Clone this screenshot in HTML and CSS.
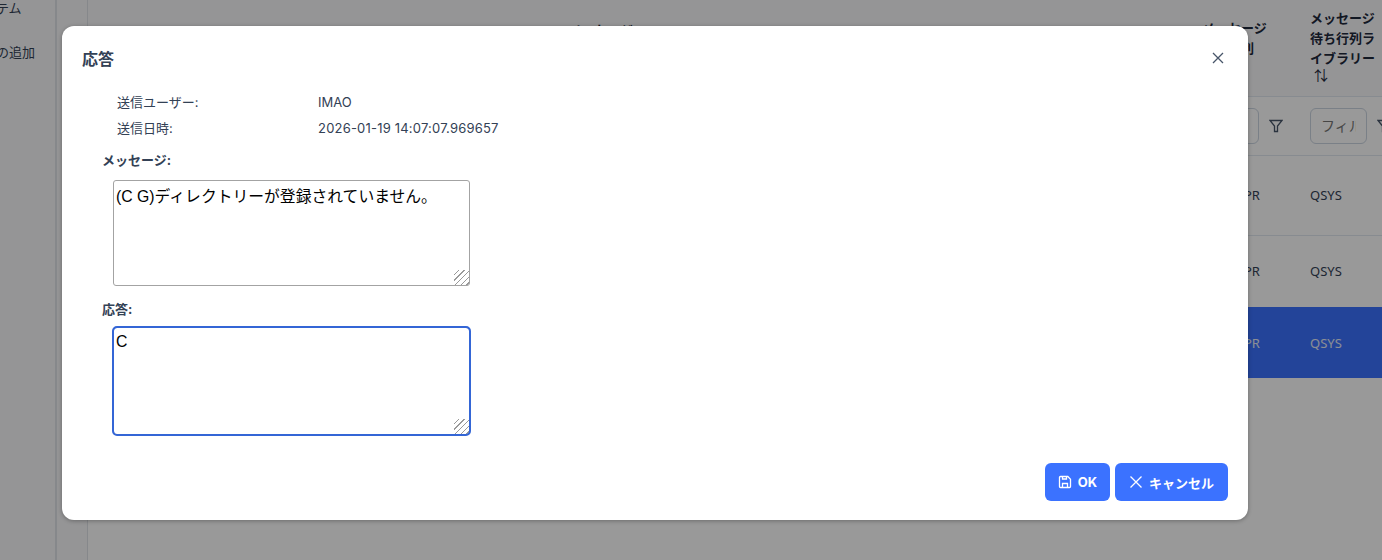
FILE: index.html
```html
<!DOCTYPE html>
<html>
  <head>
    <meta charset="utf-8" />
    <title>応答</title>
    <link rel="stylesheet" href="styles.css">
  </head>
  <body>
    <div class="page">
      <aside class="sidebar">
        <div class="side-item side-first">テム</div>
        <div class="side-item">の追加</div>
      </aside>
      <main class="content">
        <table class="grid">
          <colgroup>
            <col class="col-message" />
            <col class="col-queue" />
            <col class="col-lib" />
          </colgroup>
          <thead>
            <tr class="head-row">
              <th class="head-center">メッセージ</th>
              <th class="head-narrow">メッセージ待ち行列<div class="sort">⇅</div></th>
              <th class="head-narrow">メッセージ待ち行列ライブラリー<div class="sort">⇅</div></th>
            </tr>
            <tr class="filter-row">
              <td></td>
              <td>
                <div class="filter">
                  <input class="filter-input" placeholder="フィルタ" />
                  <svg class="funnel" viewBox="0 0 14 14"><path d="M1 1.500h12L8.500 7v5.500h-3V7z" /></svg>
                </div>
              </td>
              <td>
                <div class="filter">
                  <input class="filter-input" placeholder="フィルタ" />
                  <svg class="funnel" viewBox="0 0 14 14"><path d="M1 1.500h12L8.500 7v5.500h-3V7z" /></svg>
                </div>
              </td>
            </tr>
          </thead>
          <tbody>
            <tr class="row-a"><td></td><td>QSYSOPR</td><td>QSYS</td></tr>
            <tr class="row-b"><td></td><td>QSYSOPR</td><td>QSYS</td></tr>
            <tr class="row-c selected"><td></td><td>QSYSOPR</td><td>QSYS</td></tr>
          </tbody>
        </table>
      </main>
    </div>

    <div class="overlay">
      <div class="dialog">
        <header class="dialog-head">
          <span class="dialog-title">応答</span>
          <svg class="close" viewBox="0 0 14 14"><path d="M2 2l10 10M12 2L2 12" /></svg>
        </header>
        <div class="info">
          <div class="info-row"><span class="info-label">送信ユーザー:</span><span>IMAO</span></div>
          <div class="info-row"><span class="info-label">送信日時:</span><span class="info-date">2026-01-19 14:07:07.969657</span></div>
        </div>
        <label class="field-label">メッセージ:</label>
        <textarea class="box box-message" readonly>(C G)ディレクトリーが登録されていません。</textarea>
        <label class="field-label field-reply">応答:</label>
        <textarea class="box box-reply">C</textarea>
        <footer class="dialog-foot">
          <button class="btn btn-ok">
            <svg class="btn-icon" viewBox="0 0 14 14"><path d="M1.500 2.500a1 1 0 0 1 1-1h7.300l2.700 2.700v7.300a1 1 0 0 1-1 1h-9a1 1 0 0 1-1-1zM4.500 12.500V8.500h5v4M4.500 1.500v2.500h4v-2.500" /></svg>
            OK
          </button>
          <button class="btn btn-cancel">
            <svg class="btn-icon" viewBox="0 0 14 14"><path d="M1.500 1.500l11 11M12.500 1.500l-11 11" /></svg>
            キャンセル
          </button>
        </footer>
      </div>
    </div>
  </body>
</html>
```

FILE: styles.css
```css
* {
  box-sizing: border-box;
}

body {
  margin: 0;
  width: 1382px;
  height: 560px;
  overflow: hidden;
  font-family: "Inter", "Noto Sans CJK JP", sans-serif;
  font-size: 13px;
  color: #334155;
  background-color: #f8f9fb;
}

.page {
  display: flex;
  height: 560px;
}

.sidebar {
  width: 57px;
  flex: none;
  background-color: #f8f9fb;
  border-right: 2px solid #dfe3e8;
  overflow: hidden;
}

.side-item {
  margin-left: -4px;
  margin-bottom: 24px;
  line-height: 20px;
  white-space: nowrap;
}

.side-first {
  margin-top: -2px;
}

.content {
  flex: 1;
  min-width: 0;
  margin-left: 30px;
  border-left: 1px solid #dfe3e8;
  overflow: hidden;
  background-color: #fff;
}

.grid {
  table-layout: fixed;
  width: 1320px;
  border-collapse: collapse;
}

.col-message {
  width: 1102px;
}

.col-queue {
  width: 108px;
}

.col-lib {
  width: 110px;
}

.grid th,
.grid td {
  padding: 0 12px;
  text-align: left;
  vertical-align: middle;
}

.grid td {
  font-family: "Noto Sans", "Noto Sans CJK JP", sans-serif;
}

.grid th {
  font-weight: 600;
  color: #1e293b;
  line-height: 20px;
}

.head-row {
  height: 96px;
  background-color: #f8f9fb;
}

.grid .head-center {
  padding: 20px 88px 0 12px;
  text-align: center;
  vertical-align: top;
}

.grid .head-narrow {
  padding: 0 30px 6px 12px;
}

.sort {
  font-size: 14px;
  font-weight: 400;
  line-height: 14px;
  padding-left: 4px;
}

.filter-row {
  height: 59px;
  border-top: 1px solid #e2e8f0;
  border-bottom: 1px solid #e2e8f0;
}

.filter {
  display: flex;
  align-items: center;
  gap: 10px;
}

.filter-input {
  width: 57px;
  height: 36px;
  flex: none;
  padding: 0 10px;
  font: inherit;
  font-size: 14px;
  border: 1px solid #cbd5e1;
  border-radius: 6px;
  background-color: #fff;
}

.funnel {
  width: 14px;
  height: 14px;
  flex: none;
  fill: none;
  stroke: #475569;
  stroke-width: 1.300;
}

.row-a {
  height: 80px;
  border-bottom: 1px solid #e2e8f0;
}

.row-b {
  height: 72px;
}

.row-c {
  height: 71px;
}

.selected {
  background-color: #3b72ff;
  color: #e8edf8;
}

.overlay {
  position: absolute;
  inset: 0;
  background-color: rgba(0, 0, 0, 0.4);
}

.dialog {
  position: absolute;
  left: 62px;
  top: 26px;
  width: 1186px;
  height: 494px;
  padding: 20px;
  background-color: #fff;
  border-radius: 12px;
  box-shadow: 0 1px 4px rgba(0, 0, 0, 0.3);
}

.dialog-head {
  display: flex;
  justify-content: space-between;
  align-items: center;
  height: 24px;
  margin-bottom: 22px;
}

.dialog-title {
  font-size: 16px;
  font-weight: 700;
  color: #334155;
}

.close {
  width: 14px;
  height: 14px;
  margin-right: 3px;
  fill: none;
  stroke: #475569;
  stroke-width: 1.300;
}

.info {
  padding-left: 35px;
  margin-bottom: 6px;
}

.info-row {
  display: flex;
  height: 26px;
  line-height: 20px;
}

.info-label {
  width: 201px;
}

.info-date {
  letter-spacing: 0.2px;
}

.field-label {
  display: block;
  margin-left: 20px;
  font-weight: 700;
  line-height: 20px;
}

.field-reply {
  margin-top: 13px;
}

.box {
  display: block;
  width: 357px;
  height: 106px;
  margin: 10px 0 0 31px;
  padding: 3px 2px;
  font-family: "Liberation Sans", "Noto Sans CJK JP", sans-serif;
  font-size: 15.800px;
  color: #000;
  background-color: #fff;
  border: 1px solid #a3a3a3;
  border-radius: 3px;
  outline: none;
}

.box::-webkit-resizer {
  background: repeating-linear-gradient(135deg, transparent 0 3px, #999 3px 4px);
  clip-path: polygon(100% 0, 100% 100%, 0 100%);
}

.box-reply {
  height: 108px;
  margin-top: 8px;
  padding-top: 5px;
  border-color: #3466d6;
  border-bottom-color: #a3a3a3;
  border-radius: 4px;
  outline: 2px solid #3466d6;
  outline-offset: -1px;
}

.dialog-foot {
  display: flex;
  justify-content: flex-end;
  gap: 5px;
  margin-top: 28px;
}

.btn {
  display: flex;
  align-items: center;
  justify-content: center;
  gap: 6px;
  height: 38px;
  padding: 0;
  font: inherit;
  font-weight: 700;
  color: #fff;
  background-color: #3b72ff;
  border: none;
  border-radius: 6px;
}

.btn-ok {
  width: 65px;
}

.btn-cancel {
  width: 113px;
}

.btn-icon {
  width: 14px;
  height: 14px;
  fill: none;
  stroke: #fff;
  stroke-width: 1.300;
}
```
